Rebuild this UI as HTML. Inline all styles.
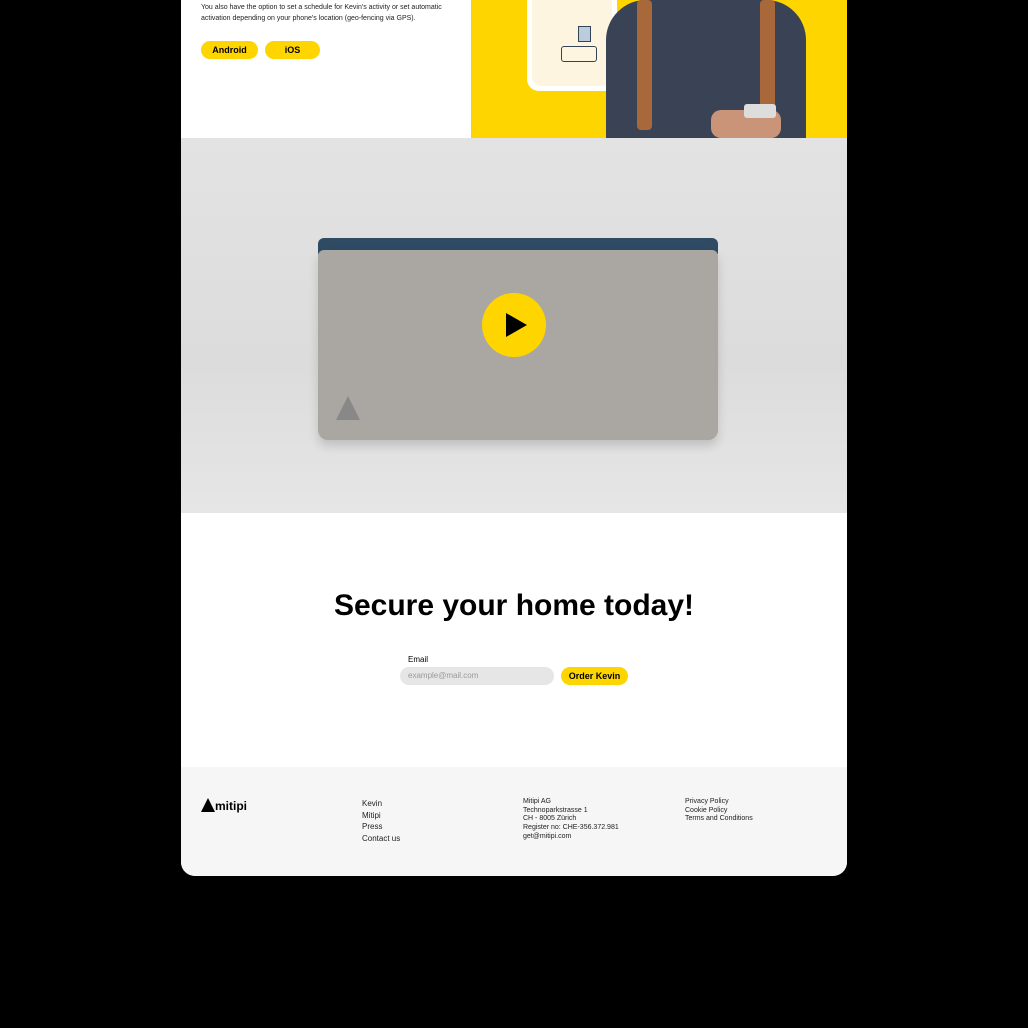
<!DOCTYPE html>
<html><head><meta charset="utf-8"><style>
body{margin:0;width:1028px;height:1028px;background:#000;position:relative;overflow:hidden;font-family:"Liberation Sans",sans-serif}
.card{position:absolute;left:181px;top:0;width:666px;height:876px;background:#fff;border-radius:0 0 14px 14px;overflow:hidden}
.abs{position:absolute}
.btn{position:absolute;background:#ffd500;border-radius:9px;font-weight:bold;font-size:9px;text-align:center;line-height:18px;height:18px}
.f{font-size:7px;color:#222;line-height:8.7px}
</style></head><body>
<div class="card">
  <div class="abs" style="left:20px;top:2px;font-size:7px;line-height:11px;color:#222">You also have the option to set a schedule for Kevin's activity or set automatic<br>activation depending on your phone's location (geo-fencing via GPS).</div>
  <div class="btn" style="left:20px;top:41px;width:57px">Android</div>
  <div class="btn" style="left:84px;top:41px;width:55px">iOS</div>
  <div class="abs" style="left:290px;top:0;width:376px;height:138px;background:#ffd500"></div>
  <div class="abs" style="left:346px;top:-20px;width:90px;height:111px;background:#fff;border-radius:12px"></div>
  <div class="abs" style="left:351px;top:-20px;width:80px;height:106px;background:#fdf5df;border-radius:9px"></div>
  <div class="abs" style="left:380px;top:46px;width:34px;height:14px;border:1px solid #345;border-radius:3px"></div>
  <div class="abs" style="left:397px;top:26px;width:11px;height:14px;border:1px solid #345;background:#bcd"></div>
  <div class="abs" style="left:425px;top:0;width:200px;height:138px;background:#3a4256;border-radius:40px 40px 0 0"></div>
  <div class="abs" style="left:456px;top:0;width:15px;height:130px;background:#a8683a;border-radius:4px"></div>
  <div class="abs" style="left:579px;top:0;width:15px;height:130px;background:#a8683a;border-radius:4px"></div>
  <div class="abs" style="left:530px;top:110px;width:70px;height:28px;background:#c99477;border-radius:10px"></div>
  <div class="abs" style="left:563px;top:104px;width:32px;height:14px;background:#ddd;border-radius:3px"></div>
  <div class="abs" style="left:0;top:138px;width:666px;height:375px;background:linear-gradient(180deg,#e3e3e3 0%,#dcdcdc 60%,#e6e6e6 100%)"></div>
  <div class="abs" style="left:137px;top:238px;width:400px;height:16px;background:#2f4a63;border-radius:6px 6px 0 0"></div>
  <div class="abs" style="left:137px;top:250px;width:400px;height:190px;background:#aaa6a2;border-radius:6px 6px 10px 10px;box-shadow:0 6px 10px rgba(0,0,0,.15)"></div>
  <div class="abs" style="left:155px;top:396px;width:0;height:0;border-left:12px solid transparent;border-right:12px solid transparent;border-bottom:24px solid #888"></div>
  <div class="abs" style="left:301px;top:293px;width:64px;height:64px;border-radius:50%;background:#ffd500"></div>
  <div class="abs" style="left:325px;top:313px;width:0;height:0;border-top:12px solid transparent;border-bottom:12px solid transparent;border-left:21px solid #000"></div>
  <div class="abs" style="left:0;top:589px;width:666px;text-align:center;font-size:30px;font-weight:bold;color:#000">Secure your home today!</div>
  <div class="abs" style="left:227px;top:655px;font-size:8px">Email</div>
  <div class="abs" style="left:219px;top:667px;width:154px;height:18px;background:#e6e6e6;border-radius:9px;font-size:8px;color:#999;line-height:18px;padding-left:8px;box-sizing:border-box">example@mail.com</div>
  <div class="btn" style="left:380px;top:667px;width:67px">Order Kevin</div>
  <div class="abs" style="left:0;top:767px;width:666px;height:109px;background:#f6f6f6"></div>
  <div class="abs" style="left:20px;top:798px;font-size:12px;color:#000;font-weight:bold"><span style="display:inline-block;width:0;height:0;border-left:7px solid transparent;border-right:7px solid transparent;border-bottom:14px solid #000;vertical-align:-2px"></span>mitipi</div>
  <div class="abs" style="left:181px;top:798px;font-size:8px;line-height:11.7px;color:#222">Kevin<br>Mitipi<br>Press<br>Contact us</div>
  <div class="abs f" style="left:342px;top:798px">Mitipi AG<br>Technoparkstrasse 1<br>CH - 8005 Zürich<br>Register no: CHE-356.372.981<br>get@mitipi.com</div>
  <div class="abs f" style="left:504px;top:798px">Privacy Policy<br>Cookie Policy<br>Terms and Conditions</div>
</div>
</body></html>
